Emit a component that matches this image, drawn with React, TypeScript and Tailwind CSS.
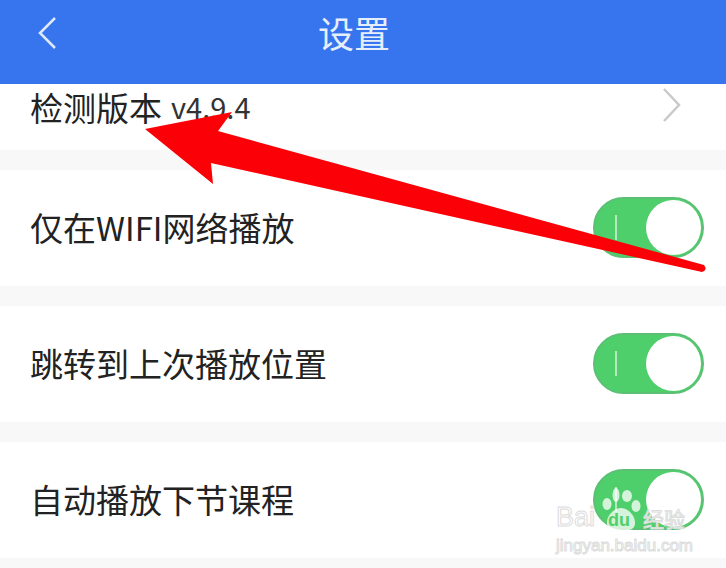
const rowText = 'text-[33px] leading-none text-[#222222] whitespace-nowrap';

function Toggle() {
  return (
    <div className="relative flex h-[61px] w-[111px] shrink-0 items-center justify-end rounded-full border-2 border-[#5cc074] bg-[#4fcf6b] pr-[1px]">
      <div className="absolute left-[20px] top-[16px] h-[25px] w-[2px] bg-[#b5eac0]" />
      <div className="h-[55px] w-[55px] rounded-full bg-white" />
    </div>
  );
}

function SettingRow({ label }: { label: string }) {
  return (
    <div className="flex h-[116px] items-center justify-between bg-white pb-[2px] pl-[30px] pr-[22px]">
      <span className={rowText}>{label}</span>
      <Toggle />
    </div>
  );
}

function Gap() {
  return <div className="h-[20px] bg-[#f8f8f8]" />;
}

export default function App() {
  return (
    <div className="relative h-[568px] w-[726px] overflow-hidden bg-[#f8f8f8] font-['Noto_Sans_CJK_SC','Liberation_Sans',sans-serif]">
      <header className="relative flex h-[84px] items-center justify-center bg-[#3675ee]">
        <svg className="absolute left-[36px] top-[15px]" width="24" height="36" viewBox="0 0 24 36" fill="none">
          <path d="M19 3 L4 18 L19 33" stroke="#dfe9fc" strokeWidth="2.5" />
        </svg>
        <h1 className="mr-[18px] pb-[20px] text-[36px] font-normal leading-none text-[#e6eefc]">设置</h1>
      </header>

      <div className="flex h-[66px] items-start justify-between bg-white pl-[30px] pr-[44px] pt-[6px]">
        <div className="flex items-center gap-[9px]">
          <span className={rowText}>检测版本</span>
          <span className="pb-[3px] text-[29px] leading-[32px] text-[#333333]">v4.9.4</span>
        </div>
        <svg className="mt-[-3px]" width="20" height="36" viewBox="0 0 20 36" fill="none">
          <path d="M2 2 L17 18 L2 34" stroke="#c9c9c9" strokeWidth="2.5" />
        </svg>
      </div>
      <Gap />
      <SettingRow label="仅在WIFI网络播放" />
      <Gap />
      <SettingRow label="跳转到上次播放位置" />
      <Gap />
      <SettingRow label="自动播放下节课程" />

      {/* red annotation arrow */}
      <svg className="absolute left-0 top-0" width="726" height="568" viewBox="0 0 726 568">
        <path
          d="M145 129 L232 112 L218 131 L704 265 Q708 270 702 272 L211 163 L213 184 Z"
          fill="#fb0006"
        />
      </svg>

      {/* baidu jingyan watermark */}
      <div className="absolute left-[556px] top-[487px] flex w-[134px] flex-col whitespace-nowrap text-white/80 [-webkit-text-stroke:1px_#dcdcdc]">
        <div className="flex h-[45px] items-end">
          <span className="w-[45px] font-['Liberation_Sans',sans-serif] text-[27px] leading-[30px]">Bai</span>
          <div className="relative h-[45px] w-[41px] shrink-0">
            <svg className="absolute left-0 top-0" width="41" height="45" viewBox="0 0 41 45">
              <g fill="#ffffff" fillOpacity="0.75">
                <ellipse cx="6" cy="17" rx="4.5" ry="6" />
                <ellipse cx="15" cy="8" rx="3.5" ry="7" />
                <ellipse cx="26" cy="9" rx="5" ry="6" />
                <ellipse cx="35" cy="19" rx="4.5" ry="6" />
                <path d="M20 21 C28 21 35 30 34 37 C33 44 25 44 20 43 C15 44 7 44 6 37 C5 30 12 21 20 21 Z" />
              </g>
            </svg>
            <span className="absolute left-[7px] top-[23px] font-['Liberation_Sans',sans-serif] text-[18px] font-bold leading-[20px] text-[#4fcf6b] [-webkit-text-stroke:0]">du</span>
          </div>
          <span className="ml-[1px] text-[21px] leading-[28px]">经验</span>
        </div>
        <span className="mt-[4px] font-['Liberation_Sans',sans-serif] text-[17px] leading-[20px]">jingyan.baidu.com</span>
      </div>
    </div>
  );
}
